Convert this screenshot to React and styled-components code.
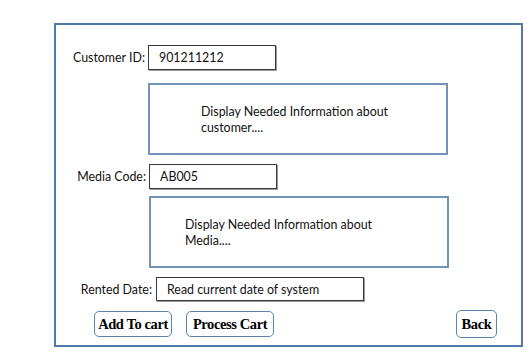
import styled, { createGlobalStyle } from "styled-components"

const GlobalStyle = createGlobalStyle`
body {
  margin: 0;
  background: #ffffff;
  font-family: "Lato", "Open Sans", sans-serif;
  color: #111;
}
`

//
const Frame = styled.div`
box-sizing: border-box;
margin: 23px 0 0 54px;
width: 469px;
height: 324px;
border: 2px solid #4f7aa8;
display: flex;
flex-direction: column;
`
//
const Field = styled.div`
display: flex;
align-items: center;
margin-top: ${props => props.top}px;
padding-left: ${props => props.indent}px;
`
//
const Label = styled.span`
box-sizing: border-box;
width: ${props => props.width}px;
text-align: right;
font-size: 12.4px;
padding-right: ${props => props.gap || 3}px;
`
//
const Input = styled.div`
box-sizing: border-box;
width: ${props => props.width}px;
height: ${props => props.height || 25}px;
border: 1px solid #3a3a3a;
box-shadow: 1px 1px 0 #9a9a9a;
padding-left: ${props => props.pad || 10}px;
display: flex;
align-items: center;
font-size: 12.4px;
`
//
const InfoBox = styled.div`
box-sizing: border-box;
width: 300px;
height: 72px;
margin-top: ${props => props.top}px;
margin-left: ${props => props.left}px;
border: 2px solid #7294bb;
padding: ${props => props.padTop}px 0 0 ${props => props.padLeft}px;
font-size: 12.4px;
line-height: 16px;
`
//
const ButtonRow = styled.div`
display: flex;
align-items: flex-start;
margin-top: 9px;
padding-left: 38px;
padding-right: 24px;
`
//
const Button = styled.button`
box-sizing: border-box;
width: ${props => props.w}px;
height: ${props => props.h || 26}px;
margin-top: ${props => props.down || 0}px;
margin-left: ${props => props.push ? "auto" : props.gap + "px"};
padding: 0;
background: #fff;
border: 1.5px solid #5b83b0;
border-radius: 5px;
font-family: "Liberation Serif", "Times New Roman", serif;
font-weight: bold;
font-size: 14.5px;
color: #000;
letter-spacing: -0.4px;
`

const App = () => {
  return (
    <>
      <GlobalStyle />
      <Frame>
        <Field top={20}>
          <Label width={92}>Customer ID:</Label>
          <Input width={128}>901211212</Input>
        </Field>

        <InfoBox top={13} left={92} padTop={19} padLeft={51}>
          Display Needed Information about<br />customer....
        </InfoBox>

        <Field top={9}>
          <Label width={93}>Media Code:</Label>
          <Input width={128}>AB005</Input>
        </Field>

        <InfoBox top={7} left={93} padTop={19} padLeft={34}>
          Display Needed Information about<br />Media....
        </InfoBox>

        <Field top={9}>
          <Label width={100} gap={4}>Rented Date:</Label>
          <Input width={208} height={24}>Read current date of system</Input>
        </Field>

        <ButtonRow>
          <Button w={78} down={1}>Add To cart</Button>
          <Button w={88} gap={14} down={1}>Process Cart</Button>
          <Button w={41} h={28} push>Back</Button>
        </ButtonRow>
      </Frame>
    </>
  )
}

export default App
